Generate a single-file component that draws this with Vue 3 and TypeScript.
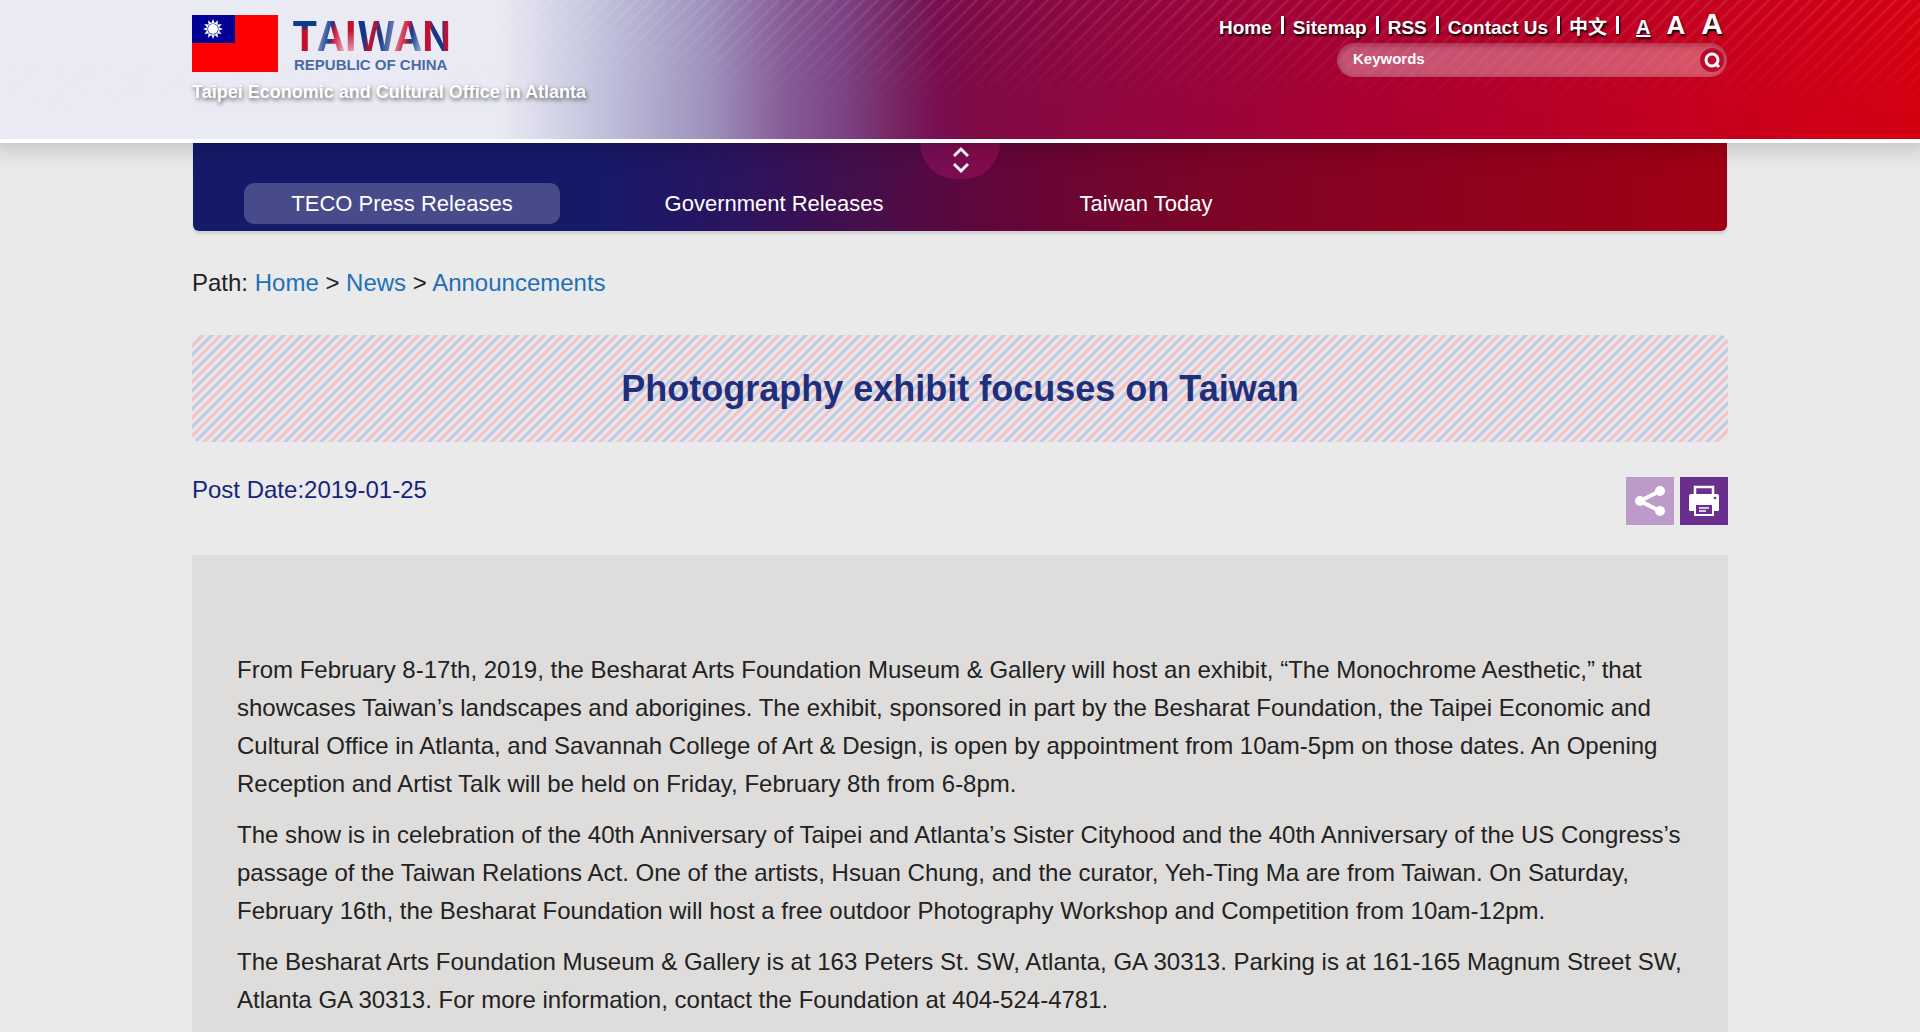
<script setup lang="ts">
import { ref } from 'vue'

interface LinkItem {
  label: string
  href: string
}

const topLinks: LinkItem[] = [
  { label: 'Home', href: '#home' },
  { label: 'Sitemap', href: '#sitemap' },
  { label: 'RSS', href: '#rss' },
  { label: 'Contact Us', href: '#contact' },
  { label: '中文', href: '#zh' },
]

const sizes = ['small', 'medium', 'large']
const activeSize = ref('small')

const navLinks: LinkItem[] = [
  { label: 'TECO Press Releases', href: '#teco' },
  { label: 'Government Releases', href: '#government' },
  { label: 'Taiwan Today', href: '#today' },
]
const activeNav = ref('TECO Press Releases')

const keywords = ref('')

const logoLetters = ['T', 'A', 'I', 'W', 'A', 'N']

const rays = Array.from({ length: 12 }, (_, i) => i * 30)

const paragraphs: string[] = [
  'From February 8-17th, 2019, the Besharat Arts Foundation Museum & Gallery will host an exhibit, “The Monochrome Aesthetic,” that showcases Taiwan’s landscapes and aborigines. The exhibit, sponsored in part by the Besharat Foundation, the Taipei Economic and Cultural Office in Atlanta, and Savannah College of Art & Design, is open by appointment from 10am-5pm on those dates. An Opening Reception and Artist Talk will be held on Friday, February 8th from 6-8pm.',
  'The show is in celebration of the 40th Anniversary of Taipei and Atlanta’s Sister Cityhood and the 40th Anniversary of the US Congress’s passage of the Taiwan Relations Act. One of the artists, Hsuan Chung, and the curator, Yeh-Ting Ma are from Taiwan. On Saturday, February 16th, the Besharat Foundation will host a free outdoor Photography Workshop and Competition from 10am-12pm.',
  'The Besharat Arts Foundation Museum & Gallery is at 163 Peters St. SW, Atlanta, GA 30313. Parking is at 161-165 Magnum Street SW, Atlanta GA 30313. For more information, contact the Foundation at 404-524-4781.',
]
</script>

<template>
  <div class="page">
    <header class="banner">
      <div class="wrap banner-row">
        <a class="brand" href="#home">
          <span class="brand-marks">
            <svg class="flag" viewBox="0 0 86 57" aria-hidden="true">
              <rect width="86" height="57" fill="#fe0000" />
              <rect width="43" height="28" fill="#000095" />
              <g fill="#fff" transform="translate(21 14)">
                <path v-for="r in rays" :key="r" d="M-2 -5 L0 -10 L2 -5 Z" :transform="`rotate(${r})`" />
                <circle r="5.6" fill="#000095" />
                <circle r="5" />
              </g>
            </svg>
            <span class="logotype">
              <span class="logo-name"><span v-for="(l, i) in logoLetters" :key="i" :class="'l' + i">{{ l }}</span></span>
              <span class="logo-sub">REPUBLIC OF CHINA</span>
            </span>
          </span>
          <span class="office">Taipei Economic and Cultural Office in Atlanta</span>
        </a>
        <div class="tools">
          <nav class="top-links" aria-label="Site">
            <template v-for="t in topLinks" :key="t.label">
              <a :href="t.href">{{ t.label }}</a><i class="bar"></i>
            </template>
            <span class="sizes">
              <button
                v-for="s in sizes"
                :key="s"
                type="button"
                :class="[s, { on: activeSize === s }]"
                :aria-label="s + ' text'"
                @click="activeSize = s"
              >A</button>
            </span>
          </nav>
          <form class="search" role="search" @submit.prevent>
            <input v-model="keywords" type="text" placeholder="Keywords" aria-label="Keywords" />
            <button type="submit" aria-label="Search">
              <svg viewBox="0 0 24 24" width="24" height="24" fill="none" stroke="#fff" stroke-width="3">
                <circle cx="12" cy="12" r="6" />
                <path d="M15 15 L19 19" />
              </svg>
            </button>
          </form>
        </div>
      </div>
    </header>

    <div class="wrap">
      <nav class="main-nav" aria-label="News">
        <button class="toggle" type="button" aria-label="Toggle menu">
          <svg viewBox="0 0 18 28" width="18" height="28" fill="none" stroke="#fff" stroke-width="3">
            <path d="M3 10 L10 3 L17 10 M3 18 L10 25 L17 18" />
          </svg>
        </button>
        <a
          v-for="n in navLinks"
          :key="n.label"
          :href="n.href"
          :class="{ active: activeNav === n.label }"
          @click="activeNav = n.label"
        >{{ n.label }}</a>
      </nav>

      <p class="path">
        Path: <a href="#home">Home</a> &gt; <a href="#news">News</a> &gt; <a href="#announcements">Announcements</a>
      </p>

      <main>
        <h1>Photography exhibit focuses on Taiwan</h1>
        <div class="meta">
          <p>Post Date:2019-01-25</p>
          <div class="actions">
            <button class="share" type="button" aria-label="Share">
              <svg viewBox="0 0 48 48" width="48" height="48" fill="#fff">
                <path d="M34 14 L14 24 L34 34" fill="none" stroke="#fff" stroke-width="4" />
                <circle cx="14" cy="24" r="5" />
                <circle cx="34" cy="14" r="5" />
                <circle cx="34" cy="34" r="5" />
              </svg>
            </button>
            <button class="print" type="button" aria-label="Print">
              <svg viewBox="0 0 48 48" width="48" height="48">
                <rect x="15" y="10" width="18" height="10" fill="none" stroke="#fff" stroke-width="2.5" />
                <path d="M11 17h26a2 2 0 0 1 2 2v14a1 1 0 0 1-1 1H10a1 1 0 0 1-1-1V19a2 2 0 0 1 2-2z" fill="#fff" />
                <rect x="14" y="26" width="20" height="13" fill="#fff" />
                <rect x="16" y="28" width="16" height="9" fill="#6a2f8c" />
                <path d="M19 31h10M19 34h7" stroke="#fff" stroke-width="1.5" />
                <circle cx="35" cy="21" r="1.3" fill="#6a2f8c" />
                <rect x="17" y="12" width="14" height="5" fill="#6a2f8c" />
              </svg>
            </button>
          </div>
        </div>
        <article>
          <p v-for="(p, i) in paragraphs" :key="i">{{ p }}</p>
        </article>
      </main>
    </div>
  </div>
</template>

<style>
body {
  margin: 0;
  background: #eaeaea;
}
</style>

<style scoped>
.page {
  font-family: "Liberation Sans", "Noto Sans CJK TC", sans-serif;
  font-size: 24px;
  color: #222;
  height: 100vh;
  overflow: hidden;
}
* {
  box-sizing: border-box;
}
a {
  text-decoration: none;
}
button {
  font-family: inherit;
  border: 0;
  padding: 0;
  cursor: pointer;
}
.wrap {
  width: 80%;
  margin: 0 auto;
}
.banner {
  position: relative;
  z-index: 1;
  height: 143px;
  border-bottom: 4px solid #fff;
  box-shadow: 0 -8px 24px 12px rgba(0, 0, 0, 0.2);
  background:
    linear-gradient(90deg, #eaeaf4 0, #eaeaf4 26%, #c4c4de 31%, #9d90bc 37%, #865a96 41%, #7c4283 44%, #76225f 47%, #780d50 49%, #800a44 51%, #94053e 60%, #a90030 71%, #b90026 82%, #c9001b 91%, #d40011 100%);
}
.banner::before {
  content: "";
  position: absolute;
  inset: 0;
  background: repeating-linear-gradient(135deg, rgba(255, 255, 255, 0.1) 0 1px, transparent 3px 9px, rgba(255, 255, 255, 0.1) 10px);
  mask-image: linear-gradient(#000, transparent 80%);
}
.banner-row {
  position: relative;
  display: flex;
  justify-content: space-between;
}
.brand {
  display: flex;
  flex-direction: column;
  padding-top: 15px;
}
.brand-marks {
  display: flex;
  gap: 14px;
}
.flag {
  width: 86px;
  height: 57px;
}
.logotype {
  display: flex;
  flex-direction: column;
}
.logo-name {
  display: flex;
  height: 42px;
  font-family: "Noto Sans CJK TC", sans-serif;
  font-weight: 700;
  font-size: 41px;
  line-height: 36px;
}
.logo-name span {
  height: 38px;
  color: transparent;
  background-clip: text;
}
.l0 { background-image: linear-gradient(#12388a 32%, #c40f30 40%); }
.l1 { background-image: linear-gradient(100deg, #8fa0cc 10%, #17398a 50%, #c81436 58%, #e8a0b0 95%); }
.l2 { background-image: linear-gradient(#c40f30 40%, #e4a5b4); }
.l3 { background-image: linear-gradient(100deg, #12388a 25%, #c8102f 40%, #17398a 60%, #8fa0cc); }
.l4 { background-image: linear-gradient(100deg, #e8a0b0 5%, #c81436 50%, #17398a 60%, #8fa0cc 95%); }
.l5 { background-image: linear-gradient(90deg, #c40f30 28%, #12388a 40% 70%, #c40f30 78%); }
.logo-sub {
  color: #4a6ba6;
  font-weight: 700;
  font-size: 15px;
  line-height: 16px;
  padding-left: 2px;
}
.office {
  color: #fff;
  font-weight: 700;
  font-size: 18px;
  line-height: 22px;
  margin-top: 8px;
  text-shadow: 1px 2px 4px rgba(0, 0, 0, 0.6);
}
.tools {
  display: flex;
  flex-direction: column;
  align-items: flex-end;
}
.top-links {
  display: flex;
  align-items: baseline;
  height: 43px;
  padding: 7px 5px 0 0;
  font-weight: 700;
  font-size: 19px;
  line-height: 42px;
  text-shadow: 1px 2px 2px #000;
}
.top-links a {
  color: #fff;
}
.bar {
  width: 3px;
  height: 18px;
  margin: 0 9px;
  background: #fff;
  box-shadow: 1px 1px 2px #000;
}
.sizes {
  display: flex;
  align-items: baseline;
  gap: 16px;
  padding-left: 8px;
}
.sizes button {
  background: none;
  color: #fff;
  font-weight: 700;
  text-shadow: inherit;
}
.sizes .small { font-size: 20px; }
.sizes .medium { font-size: 26px; }
.sizes .large { font-size: 30px; }
.sizes .on {
  text-decoration: underline;
}
.search {
  display: flex;
  align-items: center;
  width: 390px;
  height: 34px;
  margin-right: 1px;
  padding: 0 3px 0 16px;
  border-radius: 17px;
  background: rgba(255, 255, 255, 0.32);
  box-shadow: inset 0 2px 6px rgba(120, 0, 30, 0.5);
}
.search input {
  flex: 1;
  border: 0;
  padding: 0 0 4px;
  background: none;
  outline: none;
  color: #fff;
  font-family: inherit;
  font-weight: 700;
  font-size: 15px;
}
.search input::placeholder {
  color: #fff;
  opacity: 1;
}
.search button {
  display: flex;
  border-radius: 50%;
  background: #bd0a2c;
}
.main-nav {
  position: relative;
  display: flex;
  height: 88px;
  margin: 0 1px;
  padding: 40px 23px 0;
  border-radius: 0 0 6px 6px;
  background: linear-gradient(90deg, #15196a 0, #15196a 26%, #2a1460 35%, #4a0d48 45%, #62063a 52%, #7a0428 65%, #8a0220 78%, #a00014 100%);
  box-shadow: 0 3px 2px rgba(0, 0, 0, 0.1);
}
.main-nav a {
  flex: 0 0 316px;
  height: 41px;
  margin: 0 28px;
  border-radius: 10px;
  color: #fff;
  font-size: 22px;
  line-height: 41px;
  text-align: center;
}
.main-nav .active {
  background: rgba(255, 255, 255, 0.22);
}
.toggle {
  position: absolute;
  top: 0;
  left: 50%;
  width: 80px;
  height: 36px;
  margin-left: -40px;
  border-radius: 0 0 40px 40px;
  background: linear-gradient(90deg, #760e58, #840a48);
}
.path {
  margin: 38px 0 0;
  line-height: 28px;
}
.path a {
  color: #2070b8;
}
h1 {
  margin: 38px 0 0;
  height: 107px;
  border-radius: 8px;
  color: #1e2f7d;
  font-size: 36px;
  line-height: 107px;
  text-align: center;
  background: 11px 0 / 18px 18px
    linear-gradient(135deg, #f0c2c8 0 3%, #eaeaea 10% 15%, #c3c9e1 22% 28%, #eaeaea 35% 40%, #f0c2c8 47% 53%, #eaeaea 60% 65%, #c3c9e1 72% 78%, #eaeaea 85% 90%, #f0c2c8 97%);
}
.meta {
  display: flex;
  justify-content: space-between;
  padding: 35px 0 30px;
  color: #14267c;
}
.meta p {
  margin: 0;
  line-height: 26px;
}
.actions {
  display: flex;
  gap: 6px;
}
.actions button {
  width: 48px;
  height: 48px;
}
.share {
  background: #bd9bc8;
}
.print {
  background: #6a2f8c;
}
article {
  padding: 96px 45px 60px;
  background: #dedddb;
}
article p {
  margin: 0 0 13px;
  line-height: 38px;
}
</style>
